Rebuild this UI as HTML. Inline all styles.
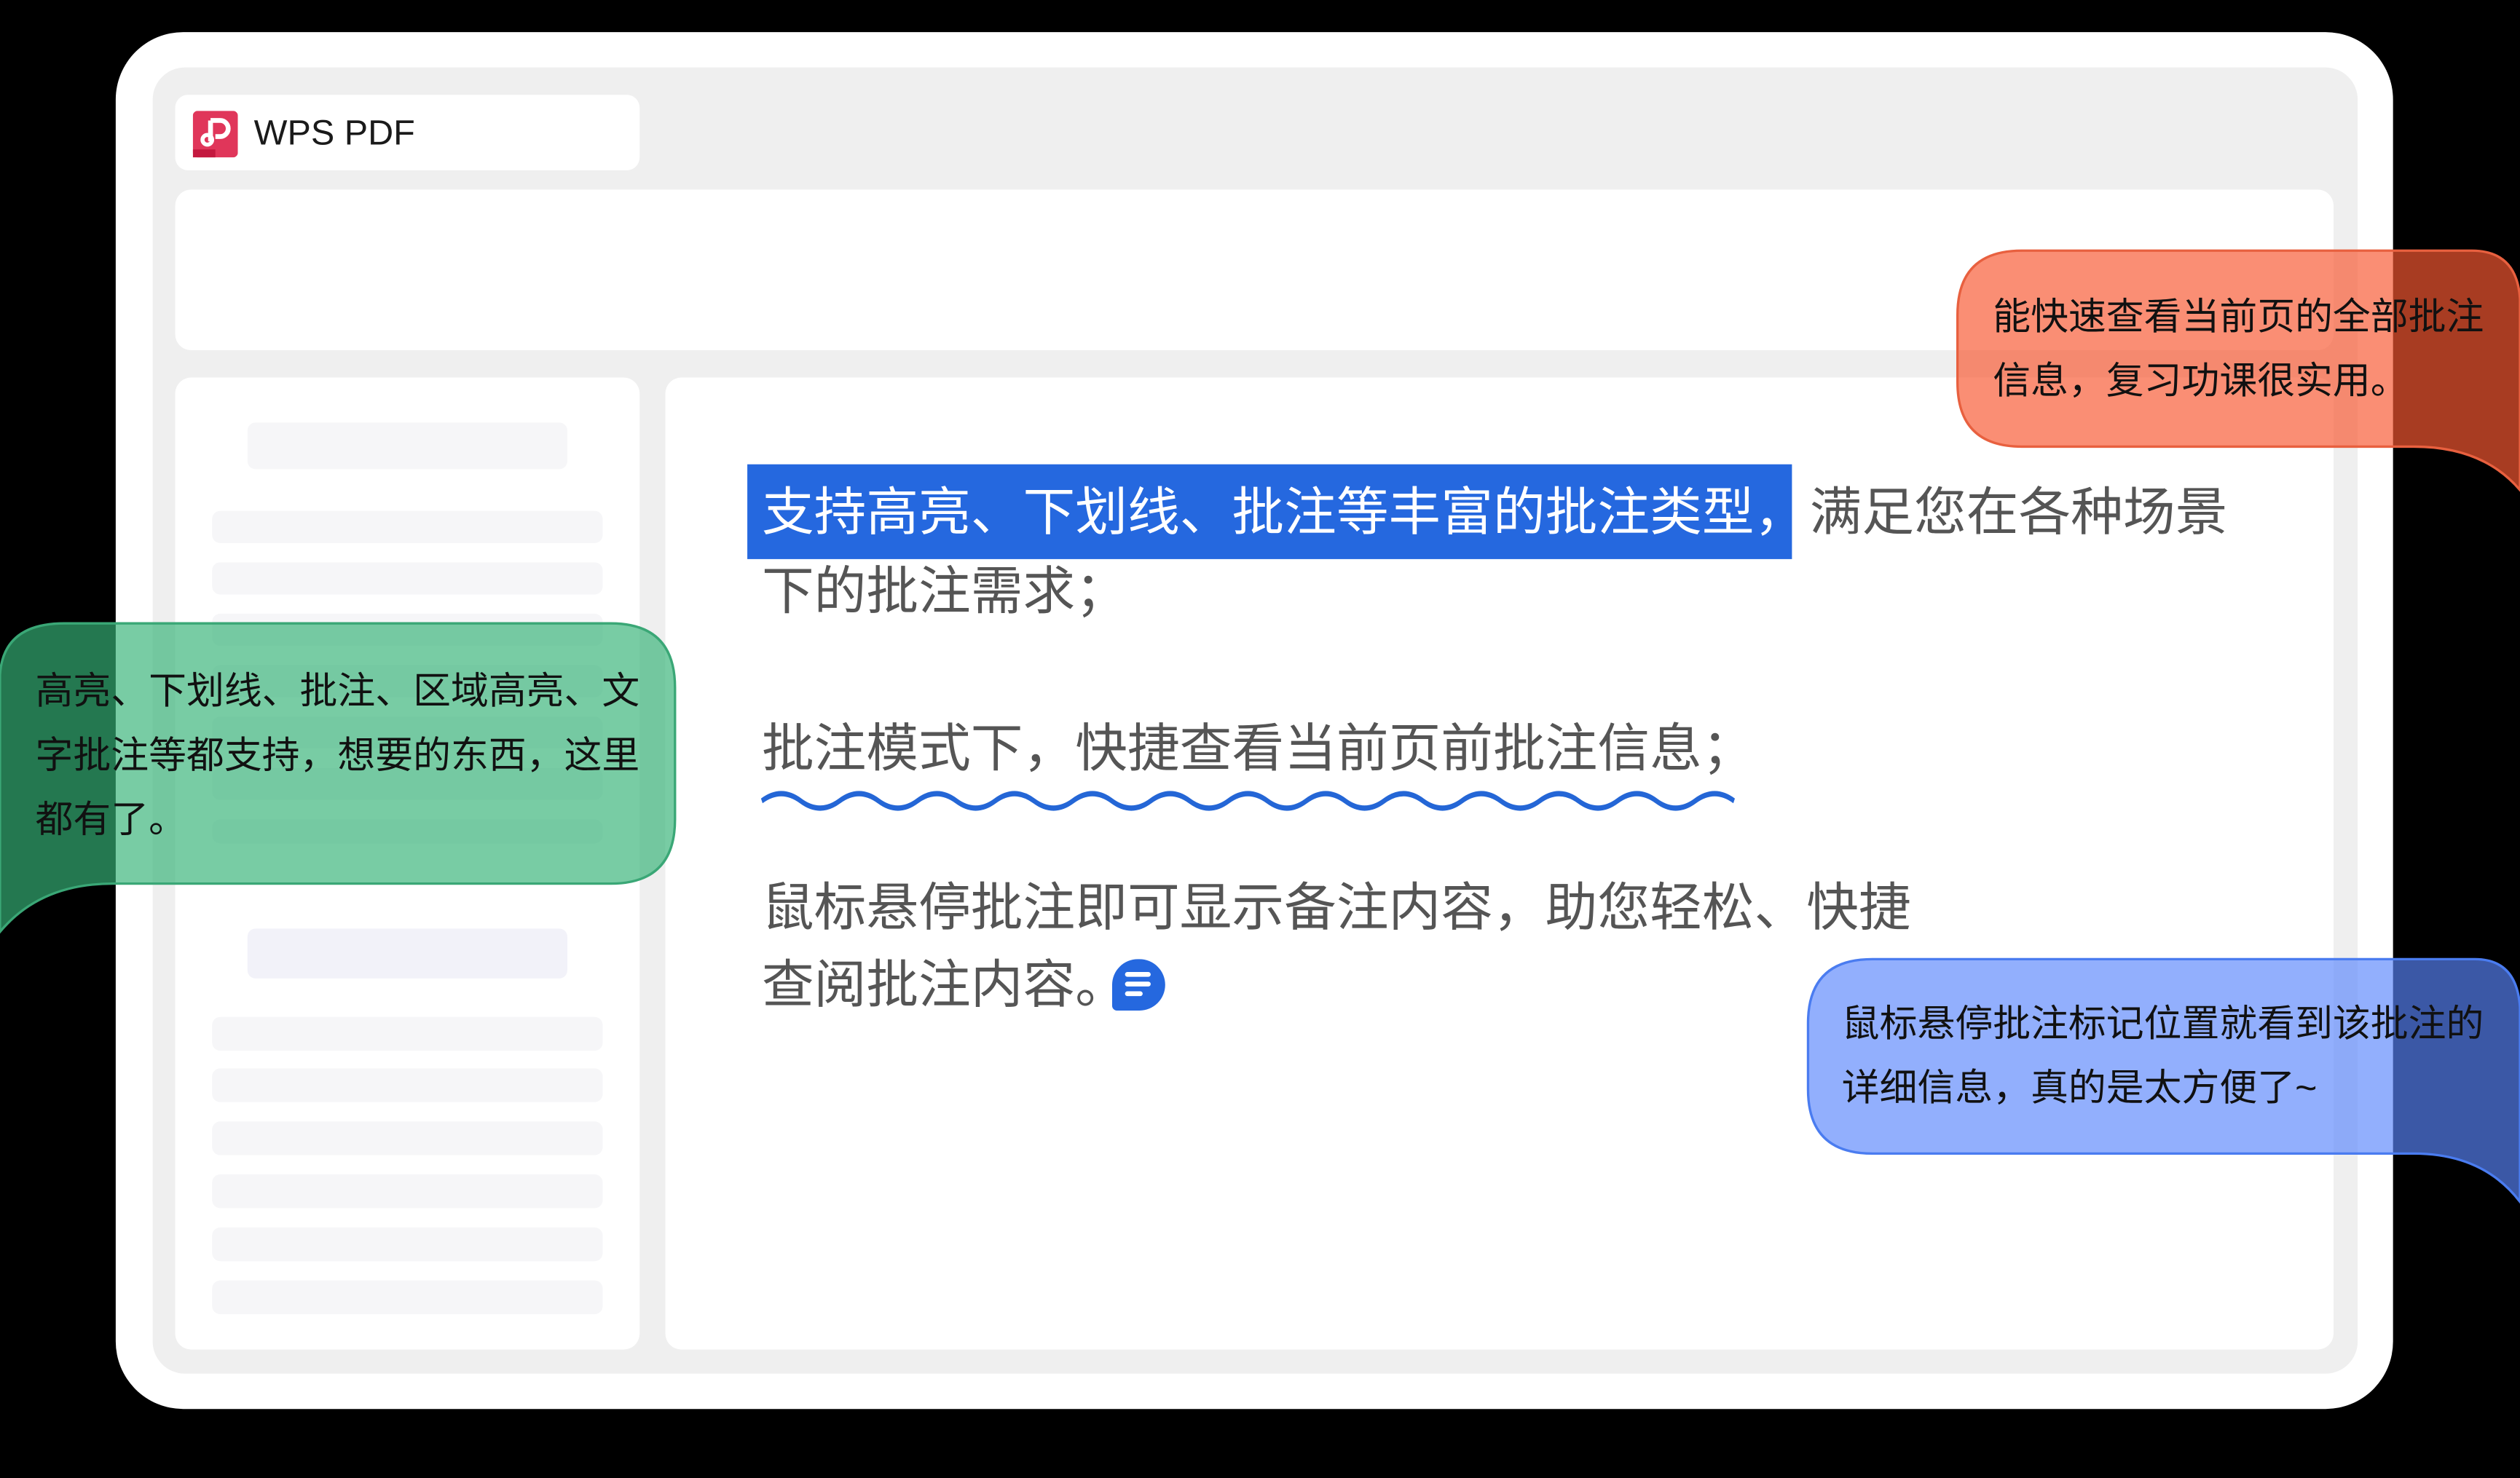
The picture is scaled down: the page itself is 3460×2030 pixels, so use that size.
<!DOCTYPE html>
<html><head><meta charset="utf-8">
<style>
html,body{margin:0;padding:0;background:#000;width:3460px;height:2030px;overflow:hidden}
#s{position:absolute;left:0;top:0;width:1568px;height:920px;transform:scale(2.20663);transform-origin:0 0;font-family:"Liberation Sans","Noto Sans CJK SC",sans-serif}
.a{position:absolute}
.bar{position:absolute;background:#f6f6f8;border-radius:5px}
.t{position:absolute;font-size:32.5px;color:#555;white-space:nowrap;line-height:1}
.bt{position:absolute;font-size:23.5px;color:#111;line-height:40px;white-space:nowrap}
</style></head><body>
<div id="s">
<div class="a" style="left:72px;top:20px;width:1417px;height:857px;background:#fff;border-radius:42px"></div>
<div class="a" style="left:95px;top:42px;width:1372px;height:813px;background:#efefef;border-radius:20px"></div>
<div class="a" style="left:109px;top:59px;width:289px;height:47px;background:#fff;border-radius:8px"></div>
<svg class="a" style="left:120px;top:69px" width="28" height="29" viewBox="0 0 28 29">
<rect x="0" y="0" width="28" height="29" rx="3" fill="#e0365a"/>
<rect x="0" y="24" width="14" height="5" fill="#c4193f"/>
<path d="M11 6 H17 a5 5 0 0 1 0 10 H14 M11 6 V19" stroke="#fff" stroke-width="3" fill="none"/>
<circle cx="9" cy="18" r="3" stroke="#fff" stroke-width="2.5" fill="none"/>
</svg>
<div class="a" style="left:158px;top:70px;font-size:22px;color:#1a1a1a">WPS PDF</div>
<div class="a" style="left:109px;top:118px;width:1343px;height:100px;background:#fff;border-radius:10px"></div>
<div class="a" style="left:109px;top:235px;width:289px;height:605px;background:#fff;border-radius:10px"></div>
<div class="bar" style="left:154px;top:263px;width:199px;height:29px"></div>
<div class="bar" style="left:132px;top:318px;width:243px;height:20px"></div>
<div class="bar" style="left:132px;top:350px;width:243px;height:20px"></div>
<div class="bar" style="left:132px;top:382px;width:243px;height:20px"></div>
<div class="bar" style="left:132px;top:414px;width:243px;height:20px"></div>
<div class="bar" style="left:132px;top:446px;width:243px;height:20px"></div>
<div class="bar" style="left:132px;top:478px;width:243px;height:20px"></div>
<div class="bar" style="left:132px;top:510px;width:243px;height:15px"></div>
<div class="bar" style="left:154px;top:578px;width:199px;height:31px;background:#f2f2f9"></div>
<div class="bar" style="left:132px;top:633px;width:243px;height:21px"></div>
<div class="bar" style="left:132px;top:665px;width:243px;height:21px"></div>
<div class="bar" style="left:132px;top:698px;width:243px;height:21px"></div>
<div class="bar" style="left:132px;top:731px;width:243px;height:21px"></div>
<div class="bar" style="left:132px;top:764px;width:243px;height:21px"></div>
<div class="bar" style="left:132px;top:797px;width:243px;height:21px"></div>
<div class="a" style="left:414px;top:235px;width:1038px;height:605px;background:#fff;border-radius:10px"></div>
<div class="a" style="left:465px;top:289px;width:650px;height:59px;background:#2568df"></div>
<div class="t" style="left:474px;top:303px;color:#fff">支持高亮、下划线、批注等丰富的批注类型，</div>
<div class="t" style="left:1126px;top:303px">满足您在各种场景</div>
<div class="t" style="left:474px;top:352px">下的批注需求；</div>
<div class="t" style="left:474px;top:450px">批注模式下，快捷查看当前页前批注信息；</div>
<svg class="a" style="left:472px;top:484px" width="612" height="22" viewBox="0 0 612 22">
<path d="M2 7 q12.1 -6 24.2 0 t24.2 0 t24.2 0 t24.2 0 t24.2 0 t24.2 0 t24.2 0 t24.2 0 t24.2 0 t24.2 0 t24.2 0 t24.2 0 t24.2 0 t24.2 0 t24.2 0 t24.2 0 t24.2 0 t24.2 0 t24.2 0 t24.2 0 t24.2 0 t24.2 0 t24.2 0 t24.2 0 t24.2 0" transform="translate(0,4) scale(1,1.5)" stroke="#2466d6" stroke-width="2.2" fill="none"/>
</svg>
<div class="t" style="left:474px;top:549px">鼠标悬停批注即可显示备注内容，助您轻松、快捷</div>
<div class="t" style="left:474px;top:597px">查阅批注内容。</div>
<div class="a" style="left:692px;top:597px;width:33px;height:32px;background:#2568df;border-radius:16px 16px 16px 3px"></div>
<div class="a" style="left:700px;top:605px;width:16px;height:3px;background:#fff;border-radius:2px"></div>
<div class="a" style="left:700px;top:611px;width:16px;height:3px;background:#fff;border-radius:2px"></div>
<div class="a" style="left:700px;top:617px;width:11px;height:3px;background:#fff;border-radius:2px"></div>
<svg class="a" style="left:0;top:0" width="1568" height="920" viewBox="0 0 1568 920">
<path d="M1258,156 H1538 Q1566,156 1568,186 V305 Q1545,278 1502,278 H1258 Q1218,278 1218,238 V196 Q1218,156 1258,156 Z" fill="rgba(247,88,50,0.68)" stroke="#e8603f" stroke-width="1.5"/>
<path d="M40,388 H380 Q420,388 420,428 V510 Q420,550 380,550 H70 Q25,550 0,580 V420 Q2,388 40,388 Z" fill="rgba(54,179,120,0.67)" stroke="#3aa776" stroke-width="1.5"/>
<path d="M1165,597 H1540 Q1566,597 1568,627 V748 Q1545,718 1502,718 H1165 Q1125,718 1125,678 V637 Q1125,597 1165,597 Z" fill="rgba(89,134,252,0.66)" stroke="#4a7cf0" stroke-width="1.5"/>
</svg>
<div class="bt" style="left:1240px;top:177px">能快速查看当前页的全部批注<br>信息，复习功课很实用。</div>
<div class="bt" style="left:22px;top:410px">高亮、下划线、批注、区域高亮、文<br>字批注等都支持，想要的东西，这里<br>都有了。</div>
<div class="bt" style="left:1146px;top:617px">鼠标悬停批注标记位置就看到该批注的<br>详细信息，真的是太方便了~</div>
</div>
</body></html>
